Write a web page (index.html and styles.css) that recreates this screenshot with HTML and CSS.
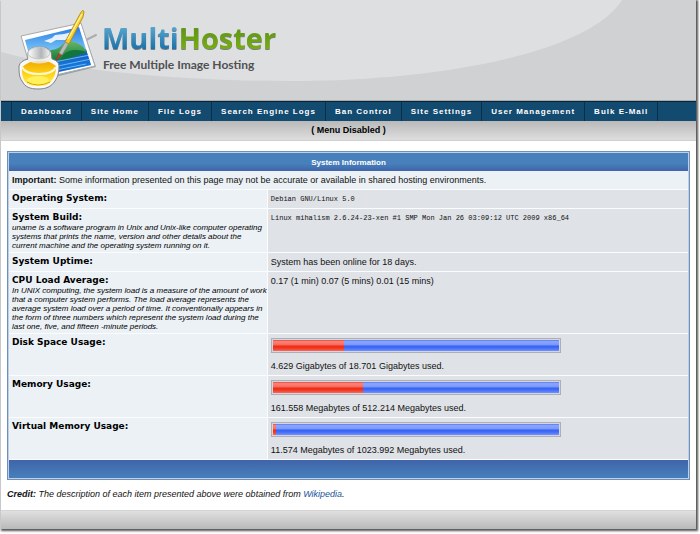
FILE: index.html
```html
<!DOCTYPE html>
<html lang="en">
<head>
<meta charset="utf-8">
<title>MultiHoster - System Information</title>
<link rel="stylesheet" href="styles.css">
</head>
<body>
<div class="page">
  <header class="header">
    <svg class="swoosh" viewBox="0 0 695 100" preserveAspectRatio="none" aria-hidden="true">
      <path d="M0 0V52C60 69 170 81 290 81C450 81 590 50 621 0Z" fill="#dedfe1"/>
    </svg>
    <svg class="logo" viewBox="0 0 95 90" aria-hidden="true">
      <defs>
        <linearGradient id="sky" x1="0" y1="0" x2="0" y2="1"><stop offset="0" stop-color="#1b6fe0"/><stop offset=".5" stop-color="#7cc8f8"/></linearGradient>
        <linearGradient id="sea" x1="0" y1="0" x2="0" y2="1"><stop offset="0" stop-color="#1b4fae"/><stop offset=".5" stop-color="#1774d8"/><stop offset="1" stop-color="#164aa5"/></linearGradient>
        <linearGradient id="hill" x1="0" y1="0" x2="0" y2="1"><stop offset="0" stop-color="#6ab766"/><stop offset="1" stop-color="#087637"/></linearGradient>
        <linearGradient id="paint" x1="0" y1="0" x2="0" y2="1"><stop offset="0" stop-color="#f0a900"/><stop offset=".6" stop-color="#ffd91c"/><stop offset="1" stop-color="#fff06a"/></linearGradient>
        <linearGradient id="lid" x1="0" y1="0" x2="1" y2="0"><stop offset="0" stop-color="#fff"/><stop offset=".6" stop-color="#b3b5b6"/><stop offset="1" stop-color="#f4f4f4"/></linearGradient>
        <clipPath id="photo"><path d="M15 35L69 22L81 60L25 72Z"/></clipPath>
      </defs>
      <path d="M72 37L86 30" stroke="#aaacae" stroke-width="2" stroke-linecap="round"/>
      <path d="M12 33L71 19L86 62L24 77Z" fill="#777b80" opacity=".6"/>
      <path d="M11 31L71 18L85 61L24 75Z" fill="#fff" stroke="#a6a9ad" stroke-width="1"/>
      <g clip-path="url(#photo)">
        <path d="M12 18H85V76H12Z" fill="url(#sky)"/>
        <path d="M34 36l8-3 3-3 9-1 8-2-4 4 5 1-8 3-9 0-5 3z" fill="#fff" opacity=".85"/>
        <path d="M25 55L84 43V76H25Z" fill="url(#sea)"/>
        <path d="M34 48C43 43 47 46 52 40Q58 34 64 37Q72 39 77 47L41 57Z" fill="url(#hill)"/>
        <path d="M53 50Q61 42 77 47L50 57Z" fill="#11763d"/>
        <path d="M44 57l36-7M48 61l33-7M46 65l30-6M43 69l33-7" stroke="#65b9f4" stroke-width="1"/>
      </g>
      <path d="M49 48L46 55L52 50Z" fill="#b34a22" stroke="#8d442a"/>
      <path d="M49 48L56 36L59 38L52 50Z" fill="#bbb" stroke="#888" stroke-width=".6"/>
      <path d="M55 37L70 9Q73 3 74 7L73 12L59 39Z" fill="#f9cd26" stroke="#a88112" stroke-width=".8"/>
      <path d="M58 34L72 9" stroke="#fff49a" stroke-width="1.4"/>
      <path d="M18 47Q20 42 29 42Q39 42 41 47L42 54Q49 56 49 61C49 67 48 72 45 76C41 82 36 84 28 84C20 84 15 82 12 76C9 72 9 67 9 61Q10 56 18 54Z" fill="#f8f8f8" stroke="#7f8184" stroke-width="1"/>
      <path d="M12 62Q20 55 29 56Q39 55 46 61C46 67 45 71 42 75C39 80 35 81 28 81C21 81 17 80 14 75C12 71 12 67 12 62Z" fill="url(#paint)"/>
      <path d="M12 62Q15 69 29 69Q43 69 46 62" fill="none" stroke="#fff9cf" stroke-width="2"/>
      <ellipse cx="28" cy="75" rx="11" ry="4" fill="#fff15e"/>
      <path d="M17 77Q28 83 40 77" fill="none" stroke="#dba600" stroke-width="1"/>
      <path d="M18 48v8q10 5 23 0v-8" fill="#eeedea" opacity=".8"/>
      <ellipse cx="29" cy="48" rx="11" ry="6" fill="url(#lid)" stroke="#c4c6c8"/>
    </svg>
    <div class="brand">
      <div class="brand-name"><span class="blue">Multi</span><span class="green">Hoster</span></div>
      <div class="tagline">Free Multiple Image Hosting</div>
    </div>
  </header>
  <nav class="nav">
    <a href="#">Dashboard</a><a href="#">Site Home</a><a href="#">File Logs</a><a href="#">Search Engine Logs</a><a href="#">Ban Control</a><a href="#">Site Settings</a><a href="#">User Management</a><a href="#">Bulk E-Mail</a>
  </nav>
  <div class="submenu">( Menu Disabled )</div>
  <main class="content">
    <table class="info">
      <thead>
        <tr><th colspan="2" class="title">System Information</th></tr>
      </thead>
      <tbody>
        <tr><td colspan="2" class="note"><b>Important:</b> Some information presented on this page may not be accurate or available in shared hosting environments.</td></tr>
        <tr><th scope="row">Operating System:</th><td><code>Debian GNU/Linux 5.0</code></td></tr>
        <tr><th scope="row">System Build:<p>uname is a software program in Unix and Unix-like computer operating<br>systems that prints the name, version and other details about the<br>current machine and the operating system running on it.</p></th><td><code>Linux mihalism 2.6.24-23-xen #1 SMP Mon Jan 26 03:09:12 UTC 2009 x86_64</code></td></tr>
        <tr><th scope="row">System Uptime:</th><td>System has been online for 18 days.</td></tr>
        <tr><th scope="row">CPU Load Average:<p>In UNIX computing, the system load is a measure of the amount of work<br>that a computer system performs. The load average represents the<br>average system load over a period of time. It conventionally appears in<br>the form of three numbers which represent the system load during the<br>last one, five, and fifteen -minute periods.</p></th><td>0.17 (1 min) 0.07 (5 mins) 0.01 (15 mins)</td></tr>
        <tr><th scope="row">Disk Space Usage:</th><td><div class="bar"><div class="track"><div class="used" style="width:24.8%"></div></div></div>4.629 Gigabytes of 18.701 Gigabytes used.</td></tr>
        <tr><th scope="row">Memory Usage:</th><td><div class="bar"><div class="track"><div class="used" style="width:31.5%"></div></div></div>161.558 Megabytes of 512.214 Megabytes used.</td></tr>
        <tr><th scope="row">Virtual Memory Usage:</th><td><div class="bar"><div class="track"><div class="used" style="width:1.1%"></div></div></div>11.574 Megabytes of 1023.992 Megabytes used.</td></tr>
      </tbody>
      <tfoot>
        <tr><td colspan="2" class="end"></td></tr>
      </tfoot>
    </table>
    <p class="credit"><b>Credit:</b> The description of each item presented above were obtained from <a href="#">Wikipedia</a>.</p>
  </main>
  <footer class="footer"></footer>
</div>
</body>
</html>
```
FILE: styles.css
```css
* { box-sizing: border-box; }

body {
  margin: 0;
  background: #fff;
  color: #111;
  font: 9px/12px "Liberation Sans", Arial, sans-serif;
}

.page {
  margin: 0 4px 4px 1px;
  background: #fff;
  box-shadow: 1px 1px 2px 1px #555;
}

.header {
  position: relative;
  display: flex;
  align-items: flex-start;
  padding: 5px 9px;
  background: #d0d1d3;
  border-bottom: 1px solid #a9abac;
}

.swoosh {
  position: absolute;
  inset: 0;
  width: 100%;
  height: 100%;
}

.logo {
  position: relative;
  width: 95px;
  height: 90px;
  margin-right: -3px;
}

.brand {
  position: relative;
  padding-top: 13px;
}

.brand-name {
  font: bold 29px/40px "Open Sans", sans-serif;
  filter: drop-shadow(0 1px 0 #77808a);
}

.brand-name span {
  background-clip: text;
  -webkit-background-clip: text;
  color: transparent;
}

.brand-name .blue { background-image: linear-gradient(#59a9d2 20%, #1b72a9 80%); }
.brand-name .green { background-image: linear-gradient(#5b9314 20%, #79ac14 80%); }

.tagline {
  padding-left: 1px;
  color: #505153;
  font: bold 12px/14px Lato, sans-serif;
}

.nav {
  display: flex;
  padding-left: 10px;
  background: #124a70;
  border-top: 1px solid #0a2437;
}

.nav a {
  padding: 0 9px;
  border-left: 1px solid #08304c;
  color: #fff;
  font-size: 8px;
  font-weight: bold;
  letter-spacing: 1px;
  line-height: 19px;
  text-decoration: none;
  white-space: nowrap;
}

.nav a:last-child { border-right: 1px solid #08304c; }

.submenu {
  background: linear-gradient(#b9b9b9, #dedede);
  border-bottom: 1px solid #d0d0d0;
  color: #000;
  font-weight: bold;
  line-height: 19px;
  text-align: center;
}

.content { padding: 10px 6px; }

.info {
  width: 100%;
  padding: 1px;
  background: #bfd0e6;
  border: 1px solid #6f8fbd;
  border-collapse: separate;
  border-spacing: 0;
}

.info th, .info td {
  padding: 3px 3px 2px;
  text-align: left;
  vertical-align: top;
  border-bottom: 1px solid #fbfcfd;
}

.info tbody th {
  width: 38%;
  padding-right: 0;
  background: #ebf1f5;
  border-right: 1px solid #fbfcfd;
  color: #000;
  font: bold 9px/11px "DejaVu Sans", Verdana, sans-serif;
}

.info tbody td { background: #dfe2e6; line-height: 13px; }
.info tbody .note { background: #ebf1f5; }

.info p {
  margin: 0;
  font: italic 8px/9px "Liberation Sans", Arial, sans-serif;
  white-space: nowrap;
}

.info .title {
  background: linear-gradient(#4780ba 60%, #4064aa);
  border: 0;
  color: #fff;
  font-size: 8px;
  line-height: 13px;
  text-align: center;
}

.info .end {
  height: 18px;
  background: linear-gradient(#4064aa, #4780ba);
  border: 0;
}

code {
  display: block;
  font: 7px/13px "Liberation Mono", "Courier New", monospace;
}

.bar {
  max-width: 290px;
  margin: 1px 0 7px;
  padding: 1px;
  background: #d3d6e0;
  border: 1px solid #adafb3;
}

.track {
  height: 11px;
  background: linear-gradient(#5577f2, #8ca7ff 15%, #7797fc 45%, #3560f2 55%, #4570fa 75%, #7391fb);
}

.used {
  height: 100%;
  background: linear-gradient(#e04a3c, #fb8478 15%, #f8695c 45%, #ee2a12 55%, #f23a22 75%, #f8695c);
}

.credit {
  margin: 8px 0 0;
  font-style: italic;
}

.credit a { color: #17539c; text-decoration: none; }

.footer {
  height: 19px;
  background: linear-gradient(#e0e0e0, #b9b9b9);
  border-top: 1px solid #d3d3d3;
}
```
